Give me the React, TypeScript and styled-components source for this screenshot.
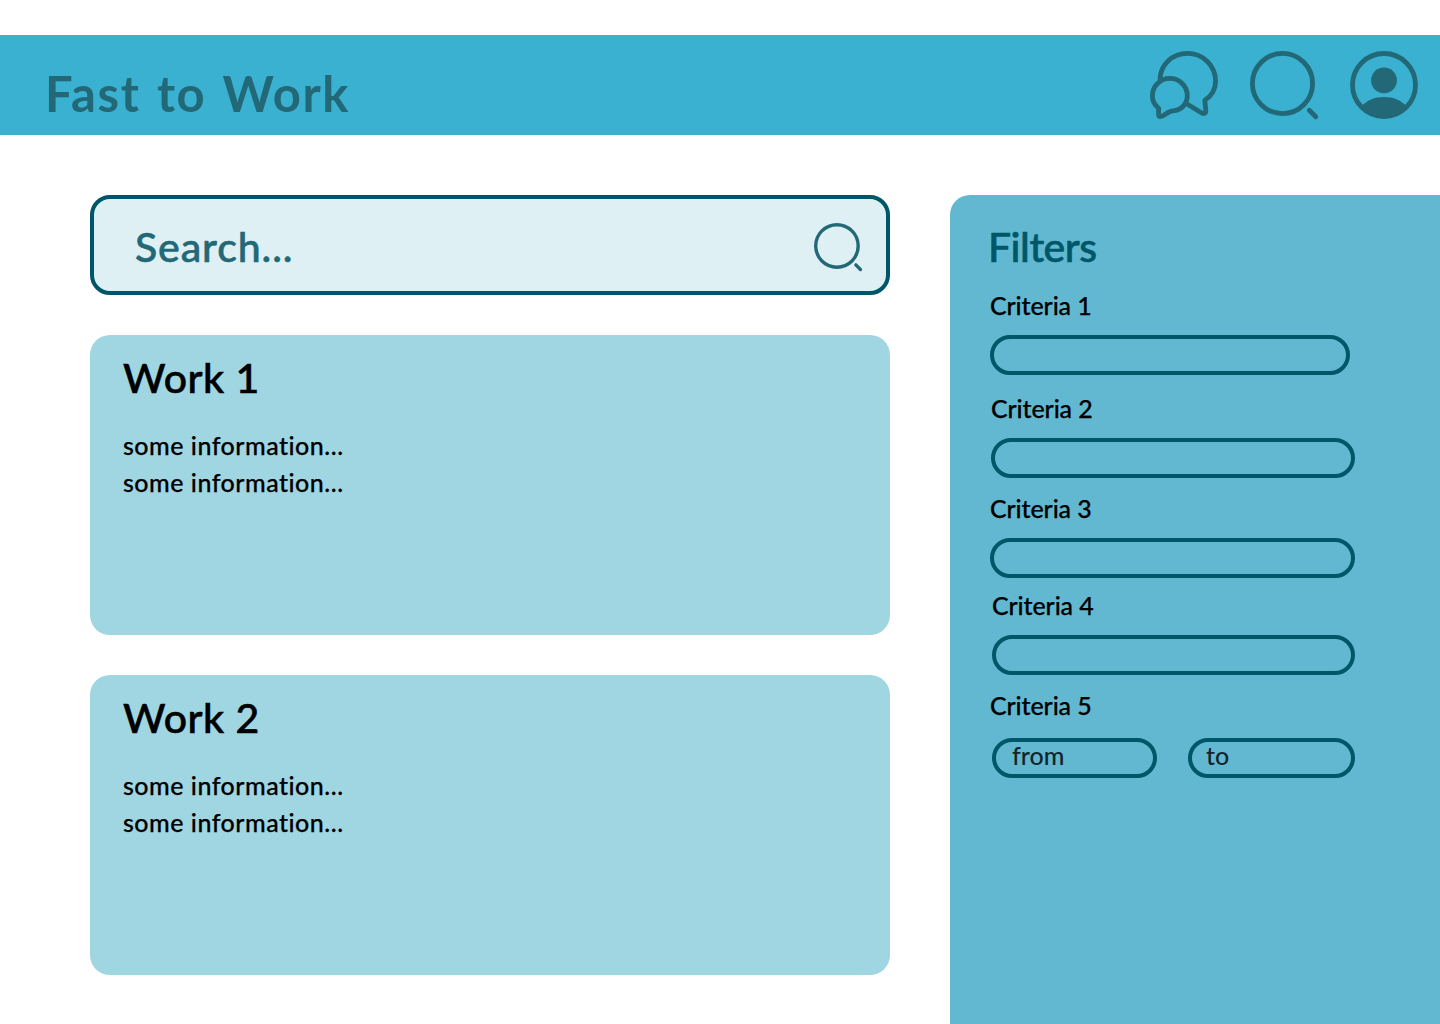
import React from "react";
import styled, { createGlobalStyle } from "styled-components";

const GlobalStyle = createGlobalStyle`
  * { box-sizing: border-box; }
  body {
    margin: 0;
    background: #ffffff;
    color: #000000;
    font-family: Lato, "Noto Sans", sans-serif;
    font-weight: 500;
    font-variant-ligatures: none;
  }
  h1, h2, p { margin: 0; }
`;

const Page = styled.div`
  height: 1024px;
  padding-top: 35px;
  overflow: hidden;
`;

const Header = styled.header`
  display: flex;
  align-items: flex-start;
  justify-content: space-between;
  height: 100px;
  padding: 16px 22px 0 45px;
  background: #3ab1d1;
  color: #226877;
`;

const Brand = styled.h1`
  padding-top: 12px;
  font-size: 49px;
  font-weight: 700;
  line-height: 60px;
  letter-spacing: 1.6px;
  word-spacing: 3px;
  white-space: nowrap;
`;

const Actions = styled.nav`
  display: flex;
  gap: 32px;
`;

const Icon = styled.svg<{ $size: number }>`
  display: block;
  flex: none;
  width: ${(p) => p.$size}px;
  height: ${(p) => p.$size}px;
  overflow: visible;
  fill: none;
  stroke: #226877;
  stroke-width: 4.8;
  stroke-linecap: round;
  stroke-linejoin: round;
`;

const Main = styled.main`
  display: flex;
  gap: 60px;
  padding: 60px 0 0 90px;
`;

const Results = styled.section`
  display: flex;
  flex-direction: column;
  gap: 40px;
  width: 800px;
`;

const SearchBox = styled.div`
  display: flex;
  justify-content: space-between;
  height: 100px;
  padding: 24px 24px 0 41px;
  border: 4px solid #005669;
  border-radius: 20px;
  background: #dff0f4;
  color: #226877;
`;

const Heading = styled.h2<{ $spacing?: number }>`
  font-size: 41px;
  font-weight: 500;
  line-height: 48px;
  letter-spacing: ${(p) => p.$spacing ?? 0}px;
  white-space: nowrap;
  -webkit-text-stroke: 0.6px currentColor;
`;

const Card = styled.article`
  height: 300px;
  padding: 19px 33px;
  border-radius: 20px;
  background: #a0d6e1;
`;

const Info = styled.div`
  margin-top: 25px;
  font-size: 25px;
  line-height: 37px;
  letter-spacing: 0.5px;
  -webkit-text-stroke: 0.25px currentColor;
`;

const Filters = styled.aside`
  flex: 1;
  height: 829px;
  padding: 28px 0 0 40px;
  border-top-left-radius: 20px;
  background: #61b8d0;
  color: #005669;
`;

const FiltersTitle = styled(Heading)`
  margin-left: -2px;
`;

const Field = styled.div<{ $top: number; $inset: number }>`
  margin-top: ${(p) => p.$top}px;
  padding-left: ${(p) => p.$inset}px;
`;

const Label = styled.p<{ $space: number }>`
  height: ${(p) => 28 + p.$space}px;
  color: #000000;
  font-size: 25px;
  line-height: 28px;
  letter-spacing: -0.1px;
  -webkit-text-stroke: 0.25px currentColor;
`;

const Inputs = styled.div<{ $inset: number }>`
  display: flex;
  gap: 31px;
  padding-left: ${(p) => p.$inset}px;
`;

const Pill = styled.div<{ $width: number; $pad?: number }>`
  width: ${(p) => p.$width}px;
  height: 40px;
  padding-left: ${(p) => p.$pad ?? 0}px;
  border: 4px solid #005669;
  border-radius: 20px;
  color: #13252a;
  font-size: 25px;
  line-height: 27px;
`;

const SearchIcon = ({ size }: { size: number }) => (
  <Icon $size={size} viewBox="0 0 68 68">
    <circle cx="32.5" cy="32.5" r="30.1" />
    <path d="M59.3 59.3 65.8 65.8" />
  </Icon>
);

const ChatIcon = () => (
  <Icon $size={68} viewBox="0 0 68 68">
    <path d="M10 28C10.500 13.500 22.500 2.400 37.500 2.400C53 2.400 65.600 14.800 65.600 30C65.600 38 61.500 45 54.800 49.200L55.800 59.500C56.100 62.200 54 63.300 51.800 62L37 53" />
    <path d="M8.700 57.300C4.800 54.200 2.400 49.800 2.400 44.800C2.400 35.200 10.200 27.400 19.900 27.400S37.300 35.200 37.300 44.800C37.300 52.500 31.500 58.800 24.500 59.700C17.500 59.800 15.500 64.500 10.800 65.500C9.200 65.800 8.400 64.800 8.500 63.200Z" />
  </Icon>
);

const UserIcon = () => (
  <Icon $size={68} viewBox="0 0 68 68">
    <circle cx="34" cy="34" r="31.5" />
    <circle cx="34" cy="29.400" r="12.900" fill="#226877" stroke="none" />
    <path d="M11.500 55.500C16.500 49.300 24.500 46 34 46S51.500 49.300 56.500 55.500C51 63 43 67 34 67S17 63 11.500 55.500Z" fill="#226877" stroke="none" />
  </Icon>
);

const fields = [
  { name: "Criteria 1", top: 20, inset: 0, width: 360 },
  { name: "Criteria 2", top: 19, inset: 1, width: 364 },
  { name: "Criteria 3", top: 16, inset: 0, width: 365 },
  { name: "Criteria 4", top: 13, inset: 2, width: 363 },
];

export default function App() {
  return (
    <Page>
      <GlobalStyle />
      <Header>
        <Brand>Fast to Work</Brand>
        <Actions>
          <ChatIcon />
          <SearchIcon size={68} />
          <UserIcon />
        </Actions>
      </Header>
      <Main>
        <Results>
          <SearchBox>
            <Heading as="span" $spacing={0.9}>Search...</Heading>
            <SearchIcon size={48} />
          </SearchBox>
          {["Work 1", "Work 2"].map((title) => (
            <Card key={title}>
              <Heading $spacing={0.5}>{title}</Heading>
              <Info>
                <p>some information...</p>
                <p>some information...</p>
              </Info>
            </Card>
          ))}
        </Results>
        <Filters>
          <FiltersTitle $spacing={-0.5}>Filters</FiltersTitle>
          {fields.map((f) => (
            <Field key={f.name} $top={f.top} $inset={f.inset}>
              <Label $space={16}>{f.name}</Label>
              <Pill $width={f.width} />
            </Field>
          ))}
          <Field $top={16} $inset={0}>
            <Label $space={19}>Criteria 5</Label>
            <Inputs $inset={2}>
              <Pill $width={165} $pad={16}>from</Pill>
              <Pill $width={167} $pad={14}>to</Pill>
            </Inputs>
          </Field>
        </Filters>
      </Main>
    </Page>
  );
}
